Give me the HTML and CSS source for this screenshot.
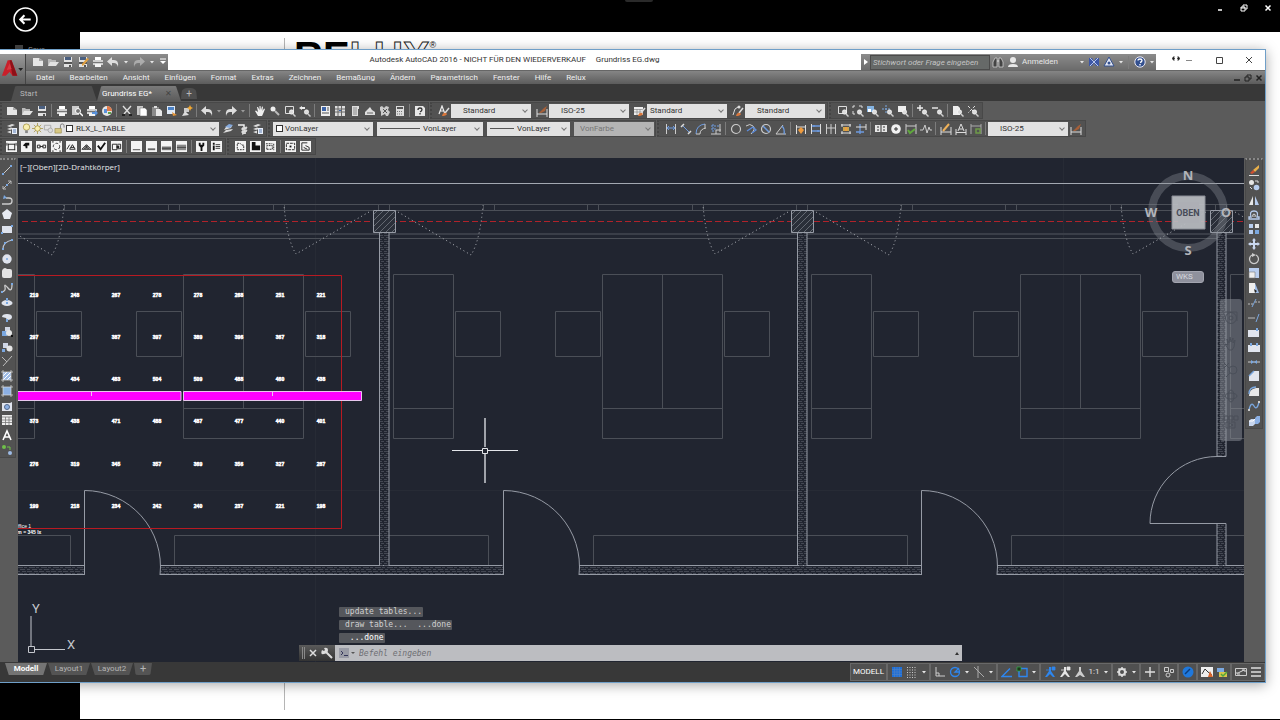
FILE: index.html
```html
<!DOCTYPE html>
<html lang="de">

<head>
  <meta charset="UTF-8">
  <meta name="viewport" content="width=device-width, initial-scale=1.0">
  <title>Autodesk AutoCAD 2016 - Grundriss EG.dwg</title>
  <link rel="stylesheet" href="styles.css">
</head>

<body>

  <!-- icon sprite, all on a 12x12 grid -->
  <svg class="sprite" aria-hidden="true">
    <!-- files and clipboard -->
    <symbol id="i-new" viewBox="0 0 12 12"><path d="M1 2h6l4 3v5H1z" fill="#e6e6e6"/><path d="M7 2v3h4z" fill="#aaa"/></symbol>
    <symbol id="i-open" viewBox="0 0 12 12"><path d="M1 10V3h3l1 1h4v2" fill="#b9b9b9"/><path d="M1 10l2-4h9l-3 4z" fill="#e2e2e2"/></symbol>
    <symbol id="i-save" viewBox="0 0 12 12"><path d="M2 1h8v10H2z" fill="#e2e2e2"/><path d="M3 1h6v3H3z" fill="#4a5f80"/><path d="M2 6h8v2H2z" fill="#555"/><path d="M7 9h2v2H7z" fill="#555"/></symbol>
    <symbol id="i-saveas" viewBox="0 0 12 12"><use href="#i-save"/><path d="M5 8l5-6 2 1-5 6-2 1z" fill="#e0a040"/></symbol>
    <symbol id="i-print" viewBox="0 0 12 12"><path d="M3 1h6v3H3z" fill="#fff"/><path d="M1 4h10v5H1z" fill="#cfcfcf"/><path d="M1 6h10v1H1z" fill="#777"/><path d="M3 8h6v3H3z" fill="#f4f4f4"/></symbol>
    <symbol id="i-preview" viewBox="0 0 12 12"><path d="M1 1h7v9H1z" fill="#ccc"/><circle cx="7" cy="6" r="2.5" fill="#777" stroke="#fff"/><path d="M9 8l3 3" stroke="#fff" stroke-width="1.5"/></symbol>
    <symbol id="i-publish" viewBox="0 0 12 12"><use href="#i-print"/><path d="M6 7h3V5l3 3-3 3V9H6z" fill="#5a93dc"/></symbol>
    <symbol id="i-dwf" viewBox="0 0 12 12"><circle cx="6" cy="6" r="5" fill="#e5e5e5"/><path d="M6 1a5 5 0 0 1 5 5H6z" fill="#e07a4a"/><path d="M3 4h3v4H3z" fill="#5a93dc"/><path d="M7 7h3v2H7z" fill="#5aa04a"/></symbol>
    <symbol id="i-cut" viewBox="0 0 12 12"><path d="M2 1l7 8M10 1L3 9" stroke="#ddd" stroke-width="1.4"/><path d="M1 9h3v2H1zM8 9h3v2H8z" fill="#222"/></symbol>
    <symbol id="i-copy" viewBox="0 0 12 12"><path d="M1 1h6v9H1z" fill="#c9c9c9"/><path d="M4 3h5l2 2v6H4z" fill="#fff" stroke="#666" stroke-width=".5"/></symbol>
    <symbol id="i-paste" viewBox="0 0 12 12"><path d="M1 2h7v9H1z" fill="#8b8b8b"/><path d="M3 1h3v2H3z" fill="#ddd"/><path d="M5 4h4l2 2v5H5z" fill="#e8e8e8"/></symbol>
    <symbol id="i-match" viewBox="0 0 12 12"><path d="M1 1h8v8H1z" fill="#dfe9f6"/><path d="M2 2h6v3H2z" fill="#4c82c6"/><path d="M6 7l5 3-4 1z" fill="#e5963a"/></symbol>
    <symbol id="i-block" viewBox="0 0 12 12"><path d="M3 3h5v4H3z" fill="#ccc"/><path d="M1 11l3-5 4 4z" fill="#ddd"/><path d="M9 0l1 2 2 1-2 1-1 2-1-2-2-1 2-1z" fill="#f2a830"/></symbol>
    <symbol id="i-undo" viewBox="0 0 12 12"><path d="M5 1v3h2q5 0 4 7-1-4-4-4H5v3L0 5.500z" fill="#ddd"/></symbol>
    <symbol id="i-redo" viewBox="0 0 12 12"><path d="M7 1v3H5q-5 0-4 7 1-4 4-4h2v3l5-4.500z" fill="#ddd"/></symbol>
    <symbol id="i-down" viewBox="0 0 12 12"><path d="M4 5h4L6 7.500z" fill="currentColor"/></symbol>
    <!-- navigation -->
    <symbol id="i-hand" viewBox="0 0 12 12"><path d="M4 11L1 6l1-.5 2 1.500L3 2h1l1.500 3V1h1l.5 4 1-3.500 1 .3L8.500 6 10 3.500l1 .5-2 5-1 2z" fill="#eee"/></symbol>
    <symbol id="i-zoom" viewBox="0 0 12 12"><circle cx="4" cy="4" r="2.500" fill="#eee"/><path d="M6 6l4 4" stroke="#bbb" stroke-width="2"/></symbol>
    <symbol id="i-glass" viewBox="0 0 12 12"><circle cx="7.500" cy="7" r="2.200" fill="#ddd" stroke="#fff" stroke-width=".6"/><path d="M9 9l2.500 2.500" stroke="#ccc" stroke-width="1.500"/></symbol>
    <symbol id="i-zwin" viewBox="0 0 12 12"><path d="M1.500 1.500h8v7h-8z" fill="none" stroke="#ddd"/><use href="#i-glass"/></symbol>
    <symbol id="i-zdyn" viewBox="0 0 12 12"><path d="M1 3V1h2M7 1h3v2M1 6v3h2" fill="none" stroke="#ddd"/><use href="#i-glass"/></symbol>
    <symbol id="i-zscale" viewBox="0 0 12 12"><path d="M0 1h7v6H0z" fill="#85b4e2"/><path d="M1 4h3v3H1z" fill="#fff"/><use href="#i-glass"/></symbol>
    <symbol id="i-zcenter" viewBox="0 0 12 12"><path d="M4 0v8M0 4h8" stroke="#7ba8e0" stroke-dasharray="2 1"/><use href="#i-glass"/></symbol>
    <symbol id="i-zobj" viewBox="0 0 12 12"><path d="M1 1h8v6H1z" fill="#eee"/><use href="#i-glass"/></symbol>
    <symbol id="i-zin" viewBox="0 0 12 12"><path d="M3 0v6M0 3h6" stroke="#eee" stroke-width="1.400"/><use href="#i-glass"/></symbol>
    <symbol id="i-zout" viewBox="0 0 12 12"><path d="M0 3h6" stroke="#eee" stroke-width="1.400"/><use href="#i-glass"/></symbol>
    <symbol id="i-zall" viewBox="0 0 12 12"><path d="M1 1h5l2 2v7H1z" fill="#eee"/><use href="#i-glass"/></symbol>
    <symbol id="i-zext" viewBox="0 0 12 12"><path d="M1 1l7 7M8 1L1 8" stroke="#ddd" stroke-dasharray="3 1.500"/><use href="#i-glass"/></symbol>
    <symbol id="i-zprev" viewBox="0 0 12 12"><path d="M0 3l3-2v1h3v2H3v1z" fill="#eee"/><use href="#i-glass"/></symbol>
    <!-- palettes -->
    <symbol id="i-props" viewBox="0 0 12 12"><path d="M2 1h9v10H2z" fill="#eee"/><path d="M3 2h4v4H3z" fill="#3d64a8"/><path d="M8 3h2M8 5h2M3 8h7" stroke="#555"/></symbol>
    <symbol id="i-dc" viewBox="0 0 12 12"><path d="M1 1h10v10H1z" fill="#ddd"/><path d="M1 4h10M1 7h10M4 1v10M7.500 1v10" stroke="#666"/><path d="M5 5h2v1H5z" fill="#3d64a8"/></symbol>
    <symbol id="i-pal" viewBox="0 0 12 12"><path d="M3 1h7v3H9v7H3z" fill="#ddd"/><path d="M4 3h4M4 5h4M4 7h4M4 9h4" stroke="#777" stroke-width=".8"/></symbol>
    <symbol id="i-sheet" viewBox="0 0 12 12"><path d="M1 10V7l5-5 2 3 3 2v3z" fill="#ddd"/><path d="M3 8h6" stroke="#666"/></symbol>
    <symbol id="i-markup" viewBox="0 0 12 12"><path d="M1 2l2-1 2 2 2-2 3 1-1 3 2 2-2 4H7L6 9l-4 2V7L1 5z" fill="#ccc"/><path d="M4 4l4 4M4 8l4-4" stroke="#555"/></symbol>
    <symbol id="i-calc" viewBox="0 0 12 12"><path d="M2 1h8v10H2z" fill="#ddd"/><path d="M3 2h6v2H3z" fill="#555"/><path d="M3 6.500h6M3 9h6" stroke="#777" stroke-dasharray="1 1"/></symbol>
    <symbol id="i-help" viewBox="0 0 12 12"><path d="M1 1h8l2 2v8H1z" fill="#e8e8e8"/><path d="M4 5q0-2 2-2t2 1.500Q8 6 6 7M6 8v1.500" fill="none" stroke="#333" stroke-width="1.300"/></symbol>
    <!-- styles -->
    <symbol id="i-brush" viewBox="0 0 12 12"><path d="M11 3L7 8" stroke="#ddd" stroke-width="1.500"/><path d="M4 11q1-4 4-3l1 1q-1 2-5 2z" fill="#d9773c"/></symbol>
    <symbol id="i-tstyle" viewBox="0 0 12 12"><path d="M1 9l3-8 3 8M2 6h4" fill="none" stroke="#eee" stroke-width="1.200"/><use href="#i-brush"/></symbol>
    <symbol id="i-dstyle" viewBox="0 0 12 12"><path d="M1 4v8M11 4v8M1 9h10" stroke="#ddd"/><path d="M3 8l5-5 3-2-2 5-4 2z" fill="#a65f38"/></symbol>
    <symbol id="i-tabstyle" viewBox="0 0 12 12"><path d="M0 2h9v8H0z" fill="#eee"/><path d="M0 4.500h9M0 7h9M3 4v6M6 4v6" stroke="#888" stroke-width=".7"/><use href="#i-brush"/></symbol>
    <symbol id="i-mlstyle" viewBox="0 0 12 12"><path d="M1 10l2-6 3-2" fill="none" stroke="#ddd"/><circle cx="7" cy="2" r="1.500" fill="#ddd"/><use href="#i-brush"/></symbol>
    <!-- layers -->
    <symbol id="i-layers" viewBox="0 0 12 12"><path d="M1 3l5-2 3 1-5 2zM1 6l4-1.500 3 1L4 7zM1 9l4-1.500v3z" fill="#ddd"/><path d="M6 5h5v6H6z" fill="#e9eef6"/><path d="M7 7h3M7 9h3" stroke="#5c7fb5"/></symbol>
    <symbol id="i-laycur" viewBox="0 0 12 12"><path d="M1 10l8-2 2-2-7 1zM2 7l7-2 1-2-6 1z" fill="#ddd"/><path d="M3 4l4-3 4 1-3 3z" fill="#85a9dc"/></symbol>
    <symbol id="i-layprev" viewBox="0 0 12 12"><path d="M5 5l5-1-1 2-4 1zM5 8l5-1-1 2-4 1zM5 11l4-1z" fill="#ddd" stroke="#ddd"/><path d="M1 2h6v2" fill="none" stroke="#eee" stroke-width="1.500"/></symbol>
    <symbol id="i-bulb" viewBox="0 0 12 12"><circle cx="6" cy="4.500" r="3.500" fill="#f8efb0" stroke="#a08e3c" stroke-width=".8"/><path d="M4.500 8h3v3h-3z" fill="#888"/></symbol>
    <symbol id="i-sun" viewBox="0 0 12 12"><path d="M6 0v12M0 6h12M2 2l8 8M10 2l-8 8" stroke="#a08e3c" stroke-width=".8"/><circle cx="6" cy="6" r="3" fill="#f8efb0" stroke="#a08e3c" stroke-width=".8"/></symbol>
    <symbol id="i-vpfreeze" viewBox="0 0 12 12"><path d="M1.500 2.500h7v5h-7z" fill="none" stroke="#aaa"/><circle cx="8" cy="8" r="2.500" fill="#ddd" stroke="#999" stroke-width=".7"/></symbol>
    <symbol id="i-lock" viewBox="0 0 12 12"><path d="M7 6V3q0-2 2-2t2 2v2" fill="none" stroke="#777"/><path d="M1 6h7v5H1z" fill="#d8c983" stroke="#8a7c42" stroke-width=".6"/></symbol>
    <!-- dimensions -->
    <symbol id="i-dlin" viewBox="0 0 12 12"><path d="M1.500 1v10M10.500 1v10" stroke="#ccc"/><path d="M2 5h8M4 3L2 5l2 2M8 3l2 2-2 2" fill="none" stroke="#6d9be0"/></symbol>
    <symbol id="i-dali" viewBox="0 0 12 12"><path d="M3 3l6 6" stroke="#6d9be0"/><path d="M1 4l3-3M8 11l3-3" stroke="#ddd" stroke-width="1.500"/></symbol>
    <symbol id="i-darc" viewBox="0 0 12 12"><path d="M1 11Q1 2 10 1" fill="none" stroke="#6d9be0"/><path d="M5 11Q5 6 11 5M1 11h4M10 1v4" fill="none" stroke="#ccc"/></symbol>
    <symbol id="i-dord" viewBox="0 0 12 12"><path d="M1 11h10M6 7h5M6 7v4M10 1v8" stroke="#ccc"/><path d="M1 3h8M3 1v9M1 6h5" stroke="#6d9be0" stroke-dasharray="2 1"/></symbol>
    <symbol id="i-drad" viewBox="0 0 12 12"><circle cx="6" cy="6" r="4.500" fill="none" stroke="#ccc" stroke-width="1.200"/></symbol>
    <symbol id="i-djog" viewBox="0 0 12 12"><path d="M1 3q4-3 7 0t-2 8" fill="none" stroke="#ccc"/><path d="M2 8l6-4M8 4l3 3-4 3" fill="none" stroke="#5d8ee0" stroke-width="1.300"/></symbol>
    <symbol id="i-ddia" viewBox="0 0 12 12"><use href="#i-drad"/><path d="M3 3l6 6" stroke="#6d9be0" stroke-width="1.500"/></symbol>
    <symbol id="i-dang" viewBox="0 0 12 12"><path d="M11 11H1l7-9" fill="none" stroke="#ccc"/><path d="M7 3q3 3 2 8" fill="none" stroke="#6d9be0" stroke-width="1.300"/></symbol>
    <symbol id="i-dquick" viewBox="0 0 12 12"><path d="M1.500 2v9M10.500 2v9M2 4h8" stroke="#ddd"/><path d="M6 4l3 3-3 4-3-4z" fill="#ef9b3e"/></symbol>
    <symbol id="i-dbase" viewBox="0 0 12 12"><path d="M1.500 1v10M10.500 1v10" stroke="#ddd"/><path d="M2 3h8M2 8h8M4 2v2M8 7v2" stroke="#6d9be0" stroke-width="1.300"/></symbol>
    <symbol id="i-dcont" viewBox="0 0 12 12"><path d="M1.500 1v10M6 1v10M10.500 1v10M1 5h10" stroke="#ccc"/></symbol>
    <symbol id="i-dspace" viewBox="0 0 12 12"><path d="M1 2h10M1 10h10M2 1v3M10 1v3M2 8v3M10 8v3" stroke="#ddd"/><path d="M3 4h6v4H3z" fill="#cba64c"/><path d="M5 4h2v4H5z" fill="#ef9b3e"/></symbol>
    <symbol id="i-dbreak" viewBox="0 0 12 12"><path d="M5 1v10M1 9h8" stroke="#6d9be0" stroke-width="1.300"/><path d="M1 4h10M11 1v6" stroke="#ddd"/></symbol>
    <symbol id="i-tol" viewBox="0 0 12 12"><path d="M0 2h12v7H0z" fill="#e6e6e6"/><path d="M6 2v7M2 4h2M2 7h2M8 4h2M8 7h2" stroke="#333"/></symbol>
    <symbol id="i-cmark" viewBox="0 0 12 12"><circle cx="6" cy="6" r="4.800" fill="#f2f2f2"/><path d="M6 4v4M4 6h4" stroke="#333"/></symbol>
    <symbol id="i-dinsp" viewBox="0 0 12 12"><path d="M1 1v10M11 1v10M1 3h10" stroke="#ccc"/><path d="M3 7l2 3 5-4" fill="none" stroke="#5fa83c" stroke-width="2"/></symbol>
    <symbol id="i-djogl" viewBox="0 0 12 12"><path d="M0 7h3l2-5 2 8 2-6 1 3h2" fill="none" stroke="#ccc"/></symbol>
    <symbol id="i-dedit" viewBox="0 0 12 12"><path d="M1 4v8M11 4v8M1 9h10" stroke="#ddd"/><path d="M3 8l6-7" stroke="#efb25a" stroke-width="2"/></symbol>
    <symbol id="i-dtedit" viewBox="0 0 12 12"><path d="M1 6v6M11 6v6M1 9.500h10M3 8l3-7 3 7M4 6h4" fill="none" stroke="#ddd"/></symbol>
    <symbol id="i-dupd" viewBox="0 0 12 12"><path d="M1 1v10M11 1v10M1 3h10" stroke="#aaa"/><path d="M6 6h4v4H6z" fill="none" stroke="#6f9a4a" stroke-width="1.500"/></symbol>
    <!-- Relux tools, black on white -->
    <symbol id="i-r1" viewBox="0 0 12 12"><path d="M2 3.500h8M2.500 3v7M9.500 3v7M2 9.500h8M1 2v3M11 2v3" stroke="#222" fill="none"/></symbol>
    <symbol id="i-r2" viewBox="0 0 12 12"><path d="M2 5l3-3h4v3H7v3H5V6z" fill="#111"/></symbol>
    <symbol id="i-r3" viewBox="0 0 12 12"><path d="M1.500 4.500h3v3h-3zM7.500 4.500h3v3h-3zM4 6h4" fill="none" stroke="#222"/></symbol>
    <symbol id="i-r4" viewBox="0 0 12 12"><circle cx="6" cy="6" r="3.500" fill="none" stroke="#222" stroke-dasharray="3 2"/><path d="M1 1h2M9 1h2M1 11h2M9 11h2" stroke="#222"/></symbol>
    <symbol id="i-r5" viewBox="0 0 12 12"><path d="M1 9l3-5M4 9l3-5 3 5zM5 7h4" fill="none" stroke="#222"/></symbol>
    <symbol id="i-r6" viewBox="0 0 12 12"><path d="M1 9l5-5 5 5zM3 9l3-4 3 4M5 9l1-3 1 3" fill="none" stroke="#222"/></symbol>
    <symbol id="i-r7" viewBox="0 0 12 12"><path d="M2 5l3 4 5-7" fill="none" stroke="#111" stroke-width="2"/></symbol>
    <symbol id="i-r8" viewBox="0 0 12 12"><path d="M1.500 3.500h5v6h-5zM7 3.500h3.500v5H7" fill="none" stroke="#222"/><path d="M6 5h3v3H6z" fill="#222"/></symbol>
    <symbol id="i-r9" viewBox="0 0 12 12"><path d="M2 9.500h8" stroke="#444"/></symbol>
    <symbol id="i-r10" viewBox="0 0 12 12"><path d="M2 9h8" stroke="#666" stroke-width="2"/></symbol>
    <symbol id="i-r11" viewBox="0 0 12 12"><path d="M1 6h10v4H1z" fill="#777"/><path d="M1 8h10" stroke="#444"/></symbol>
    <symbol id="i-r12" viewBox="0 0 12 12"><path d="M1 4h10v6H1z" fill="#888"/><path d="M1 7h10" stroke="#444"/></symbol>
    <symbol id="i-r13" viewBox="0 0 12 12"><path d="M3 2h2v2h2V2h2v3L7 7v4H5V7L3 5z" fill="#111"/></symbol>
    <symbol id="i-r14" viewBox="0 0 12 12"><path d="M2 2h2v2H2zM2 5h2v5H2z" fill="#111"/><path d="M5 4h5M5 6h5M5 8h5" stroke="#333"/></symbol>
    <symbol id="i-r15" viewBox="0 0 12 12"><path d="M2.500 2.500h3l2 2h2v5h-7z" fill="none" stroke="#222" stroke-dasharray="2 1"/></symbol>
    <symbol id="i-r16" viewBox="0 0 12 12"><path d="M2 1h4v4h5v5H2z" fill="#111"/></symbol>
    <symbol id="i-r17" viewBox="0 0 12 12"><path d="M1 3h7M2 9V5h6v4zM9.500 3v7" fill="none" stroke="#222" stroke-dasharray="2 1"/></symbol>
    <symbol id="i-r18" viewBox="0 0 12 12"><path d="M1.500 2.500h9v7h-9z" fill="none" stroke="#222" stroke-dasharray="3 1"/><path d="M5 5h2v2H5z" fill="#111"/></symbol>
    <symbol id="i-r19" viewBox="0 0 12 12"><path d="M2 2h6M2 2v8h8V7L6 5M4 7l4 2" fill="none" stroke="#222"/></symbol>
    <!-- draw -->
    <symbol id="i-line" viewBox="0 0 12 12"><path d="M2 10l8-8" stroke="#ccc"/><path d="M1 9h2v2H1zM9 1h2v2H9z" fill="#7ba8e0"/></symbol>
    <symbol id="i-xline" viewBox="0 0 12 12"><path d="M2 10l8-8M2 7v3h3M7 2h3v3" fill="none" stroke="#bbb"/><path d="M5 5h2v2H5z" fill="#7ba8e0"/></symbol>
    <symbol id="i-pline" viewBox="0 0 12 12"><path d="M1 10h7q3 0 3-3T8 4H5" fill="none" stroke="#ccc" stroke-width="1.300"/><path d="M3 1l3 3-4 1z" fill="#7ba8e0"/></symbol>
    <symbol id="i-poly" viewBox="0 0 12 12"><path d="M6 1l5 4-2 6H3L1 5z" fill="#e8ebf2"/></symbol>
    <symbol id="i-rect" viewBox="0 0 12 12"><path d="M1 3h10v7H1z" fill="#dfe3ec"/><path d="M0 9h2v2H0zM10 2h2v2h-2z" fill="#7ba8e0"/></symbol>
    <symbol id="i-arc" viewBox="0 0 12 12"><path d="M2 11q0-7 9-9" fill="none" stroke="#bbc3d2" stroke-width="1.200"/><path d="M1 10h2v2H1zM3 4h2v2H3zM10 1h2v2h-2z" fill="#7ba8e0"/></symbol>
    <symbol id="i-circ" viewBox="0 0 12 12"><circle cx="6" cy="6" r="4.700" fill="#dfe3ec"/><circle cx="6" cy="6" r="1" fill="#7ba8e0"/></symbol>
    <symbol id="i-cloud" viewBox="0 0 12 12"><rect x="1" y="2" width="10" height="9" rx="2" fill="#e3e3e3"/><circle cx="4" cy="3" r="2" fill="#e3e3e3"/></symbol>
    <symbol id="i-spline" viewBox="0 0 12 12"><path d="M1 10q4-1 3-5t3 1 4-4" fill="none" stroke="#ccc" stroke-width="1.300"/><path d="M0 9h2v2H0zM10 1h2v2h-2z" fill="#7ba8e0"/></symbol>
    <symbol id="i-ell" viewBox="0 0 12 12"><ellipse cx="6" cy="6" rx="5.500" ry="3" fill="#dfe3ec"/><path d="M5 1h2v3H5z" fill="#7ba8e0"/><path d="M5 5h2v2H5z" fill="#7ba8e0"/></symbol>
    <symbol id="i-ellarc" viewBox="0 0 12 12"><path d="M1 6q0-3 5-3t5 3-5 3l-1-2z" fill="#dfe3ec"/><path d="M5 8h2v3H5z" fill="#7ba8e0"/></symbol>
    <symbol id="i-ins" viewBox="0 0 12 12"><path d="M4 1h5v5H4z" fill="#cfd6e4"/><path d="M1 5h5v5H1z" fill="#7ba8e0"/><circle cx="8" cy="7" r="3" fill="#e6e6e6"/><path d="M10 9h2v2h-2z" fill="#111"/></symbol>
    <symbol id="i-mkblk" viewBox="0 0 12 12"><path d="M2 2h5v5H2z" fill="#cfd6e4"/><circle cx="8.500" cy="7.500" r="3" fill="#e6e6e6"/><path d="M1 8h3v3H1z" fill="#7ba8e0"/></symbol>
    <symbol id="i-point" viewBox="0 0 12 12"><path d="M1 2l5 5M11 1L2 11" stroke="#bbb"/></symbol>
    <symbol id="i-hatch" viewBox="0 0 12 12"><path d="M2 2h8v8H2z" fill="#9dbbe6"/><path d="M2 6l4-4M2 10l8-8M6 10l4-4" stroke="#fff"/><path d="M0 2h12M0 10h12M2 0v12M10 0v12" stroke="#ddd" stroke-width=".7"/></symbol>
    <symbol id="i-grad" viewBox="0 0 12 12"><path d="M2 2h8v8H2z" fill="#8cb0e4"/><path d="M0 2h12M0 10h12M2 0v12M10 0v12" stroke="#ddd" stroke-width=".7"/></symbol>
    <symbol id="i-region" viewBox="0 0 12 12"><path d="M1 3h8l2-1v9H1z" fill="#e1e5ee"/><circle cx="6" cy="7" r="2.500" fill="#8cb0e4" stroke="#54698c"/></symbol>
    <symbol id="i-table" viewBox="0 0 12 12"><path d="M1 1h10v10H1z" fill="#eee"/><path d="M1 3h10M1 6h10M1 8.500h10M4.500 3v8M8 3v8" stroke="#777" stroke-width=".8"/></symbol>
    <symbol id="i-mtext" viewBox="0 0 12 12"><path d="M2 11l4-9 4 9M3.500 8h5" fill="none" stroke="#fff" stroke-width="1.600"/></symbol>
    <symbol id="i-addsel" viewBox="0 0 12 12"><circle cx="3" cy="3" r="2" fill="#6fc04a"/><circle cx="9" cy="9" r="2" fill="#9dbbe6"/><path d="M6 3h3v3" fill="none" stroke="#6fc04a"/></symbol>
    <!-- modify -->
    <symbol id="i-erase" viewBox="0 0 12 12"><path d="M5 6l6-5v3L7 8z" fill="#e8b04a"/><path d="M2 9l3-3 2 2-3 2z" fill="#d05030"/><path d="M1 11.500h10" stroke="#ddd"/></symbol>
    <symbol id="i-mcopy" viewBox="0 0 12 12"><circle cx="3.500" cy="3.500" r="2.500" fill="#e6e6e6"/><circle cx="8.500" cy="8.500" r="2.800" fill="#b8cdee"/><path d="M7 2h3v2M2 8l2 2" fill="none" stroke="#ddd"/></symbol>
    <symbol id="i-mirror" viewBox="0 0 12 12"><path d="M5 2v9H1z" fill="#e6e6e6"/><path d="M7 2v9h4z" fill="#b8cdee"/></symbol>
    <symbol id="i-offset" viewBox="0 0 12 12"><path d="M1 10h10V8H9q2-6-3-6T3 8H1z" fill="none" stroke="#b8cdee" stroke-width="1.300"/><path d="M5 8q-1-3 1-3t1 3" fill="none" stroke="#ddd"/></symbol>
    <symbol id="i-array" viewBox="0 0 12 12"><path d="M1 1h4v4H1zM1 7h4v4H1z" fill="#b8cdee"/><path d="M7 1h4v4H7z" fill="#e6e6e6"/><path d="M7 7h4v4H7z" fill="#7ba8e0"/></symbol>
    <symbol id="i-move" viewBox="0 0 12 12"><path d="M6 0l2 2.500H7V5h2.500V4L12 6 9.500 8V7H7v2.500h1L6 12 4 9.500h1V7H2.500v1L0 6l2.500-2v1H5V2.500H4z" fill="#c8d6ee"/></symbol>
    <symbol id="i-rotate" viewBox="0 0 12 12"><path d="M4 2a4.500 4.500 0 1 0 4 0" fill="none" stroke="#ccc" stroke-width="1.300"/><path d="M4 0l4 2-4 2z" fill="#ccc"/></symbol>
    <symbol id="i-scale" viewBox="0 0 12 12"><path d="M1 1h10v10H1z" fill="#b8cdee"/><path d="M1 5h6v6H1z" fill="#eee" stroke="#777" stroke-width=".6"/></symbol>
    <symbol id="i-stretch" viewBox="0 0 12 12"><path d="M1 1h6v10H1z" fill="#eee"/><path d="M7 1l4 10H7z" fill="#9dbbe6"/><path d="M6 7l3 2-2 2z" fill="#222"/></symbol>
    <symbol id="i-trim" viewBox="0 0 12 12"><path d="M4 10l4-8" stroke="#7ba8e0"/><path d="M0 7h5M7 5h5" stroke="#bbb" stroke-dasharray="2 1"/></symbol>
    <symbol id="i-extend" viewBox="0 0 12 12"><path d="M0 6h7" stroke="#bbb"/><path d="M8 10l3-8" stroke="#7ba8e0"/></symbol>
    <symbol id="i-brkpt" viewBox="0 0 12 12"><path d="M0 4h11v7H0z" fill="#e1e5ee"/><path d="M8 2h2v3H8z" fill="#7ba8e0"/></symbol>
    <symbol id="i-brk" viewBox="0 0 12 12"><path d="M0 4h12v7H0z" fill="#e1e5ee"/><path d="M2 2h2v3H2zM8 2h2v3H8z" fill="#7ba8e0"/></symbol>
    <symbol id="i-join" viewBox="0 0 12 12"><path d="M0 6h12" stroke="#ccc"/><path d="M3 4l3 2-3 2zM9 4L6 6l3 2z" fill="#7ba8e0"/></symbol>
    <symbol id="i-cham" viewBox="0 0 12 12"><path d="M1 11V6l5-5h5v10z" fill="#e1e5ee"/><path d="M1 6l5-5" stroke="#7ba8e0" stroke-width="1.500"/></symbol>
    <symbol id="i-fillet" viewBox="0 0 12 12"><path d="M1 11q0-7 7-8h3v8z" fill="#e8e8e8"/><path d="M1 9q0-7 7-7" fill="none" stroke="#7ba8e0" stroke-width="1.300"/></symbol>
    <symbol id="i-blend" viewBox="0 0 12 12"><path d="M1 10q2-9 5-4t5-4" fill="none" stroke="#7ba8e0" stroke-width="1.300"/><path d="M0 9h2v2H0zM10 1h2v2h-2z" fill="#ccc"/></symbol>
    <symbol id="i-explode" viewBox="0 0 12 12"><path d="M1 6l2-2h4v5l-2 2H1z" fill="#c8d6ee"/><path d="M7 3l2-2h3v6l-2 2H7z" fill="#8cb0e4"/><path d="M1 6h4l2-2" fill="none" stroke="#fff"/></symbol>
    <!-- info center -->
    <symbol id="i-binoc" viewBox="0 0 12 12"><path d="M1 11V6l2-4h2v9zM7 11V2h2l2 4v5z" fill="#444" stroke="#ddd" stroke-width=".7"/><path d="M5 5h2" stroke="#ddd"/></symbol>
    <symbol id="i-user" viewBox="0 0 12 12"><circle cx="6" cy="4" r="3" fill="#e8e8e8"/><path d="M1 11q0-3 5-3t5 3z" fill="#e8e8e8"/></symbol>
    <symbol id="i-exch" viewBox="0 0 12 12"><path d="M1 2h3l2 3 2-3h3v8H8L6 7l-2 3H1z" fill="#3c57a8"/><path d="M2 2l4 4-4 4M10 2L6 6l4 4" fill="none" stroke="#b9c6ea"/></symbol>
    <symbol id="i-a360" viewBox="0 0 12 12"><path d="M6 1l5 9H1z" fill="#e4e8f4" stroke="#33508f"/><circle cx="6" cy="7" r="1.500" fill="#33508f"/></symbol>
    <symbol id="i-q" viewBox="0 0 12 12"><circle cx="6" cy="6" r="5.200" fill="#33508f" stroke="#e8e8f4"/><path d="M4 4.500Q4 3 6 3t2 1.500Q8 6 6 6.500M6 8v1.500" fill="none" stroke="#fff" stroke-width="1.300"/></symbol>
    <!-- status bar -->
    <symbol id="s-grid" viewBox="0 0 12 12"><path d="M1 1h10v10H1z" fill="#1f6fd6"/><path d="M3.500 1v10M6 1v10M8.500 1v10M1 3.500h10M1 6h10M1 8.500h10" stroke="#4a7fc4" stroke-width=".7"/></symbol>
    <symbol id="s-snap" viewBox="0 0 12 12"><path d="M1 1.500h10M1 4h10M1 6.500h10M1 9h10M1 11.500h10" stroke="#ccc" stroke-dasharray="1 1.500"/></symbol>
    <symbol id="s-ortho" viewBox="0 0 12 12"><path d="M2 1v9h9M2 7h3v3" fill="none" stroke="#ccc"/></symbol>
    <symbol id="s-polar" viewBox="0 0 12 12"><circle cx="6" cy="6" r="4.500" fill="none" stroke="#2e86ee" stroke-width="1.300"/><path d="M10 6H6l4-4" fill="none" stroke="#2e86ee" stroke-width="1.300"/></symbol>
    <symbol id="s-iso" viewBox="0 0 12 12"><path d="M1 1l10 10M5 0v12" stroke="#aaa"/></symbol>
    <symbol id="s-track" viewBox="0 0 12 12"><path d="M11 10.500H1l8-8" fill="none" stroke="#2e86ee" stroke-width="1.400"/></symbol>
    <symbol id="s-osnap" viewBox="0 0 12 12"><path d="M3 2.500h8v8H3z" fill="none" stroke="#2e86ee" stroke-width="1.400"/><path d="M1 1h4v4H1z" fill="#1c3a1c" stroke="#35b04a" stroke-width=".7"/></symbol>
    <symbol id="s-anno" viewBox="0 0 12 12"><path d="M5 1h2v4l4 6-2 0-3-3-3 3H1l4-6z" fill="currentColor"/><path d="M2 4h4M8 1h3v3H8z" fill="currentColor" stroke="currentColor" stroke-width=".8"/></symbol>
    <symbol id="s-scale" viewBox="0 0 12 12"><path d="M5 1h2v4l4 6H9L6 9l-3 2H1l4-6z" fill="#ccc"/></symbol>
    <symbol id="s-gear" viewBox="0 0 12 12"><circle cx="6" cy="6" r="3" fill="none" stroke="#ddd" stroke-width="2"/><path d="M6 1v2M6 9v2M1 6h2M9 6h2M2.500 2.500L4 4M8 8l1.500 1.500M9.500 2.500L8 4M4 8L2.500 9.500" stroke="#ddd" stroke-width="1.500"/></symbol>
    <symbol id="s-plus" viewBox="0 0 12 12"><path d="M6 1v10M1 6h10" stroke="#ddd" stroke-width="1.400"/></symbol>
    <symbol id="s-iso2" viewBox="0 0 12 12"><path d="M1.500 1.500h4v4h-4zM7.500 3.500h3v3h-3z" fill="none" stroke="#ccc"/><circle cx="5" cy="9" r="2" fill="none" stroke="#ccc"/></symbol>
    <symbol id="s-hw" viewBox="0 0 12 12"><circle cx="6" cy="6" r="5.500" fill="#1f78dc"/><path d="M3 8l5-5" stroke="#0d3c7a" stroke-width="1.500"/></symbol>
    <symbol id="s-mon" viewBox="0 0 12 12"><path d="M0 1h12v10H0z" fill="#eee"/><path d="M1 8l3-5 3 3 4 3" fill="none" stroke="#333"/><path d="M9 5l3 6H7z" fill="#d9652b"/></symbol>
    <symbol id="s-plot" viewBox="0 0 12 12"><path d="M1 2h7v4H1z" fill="#7ba8e0"/><path d="M3 6h8v5H3z" fill="#d8c44a"/><path d="M5 8l2 2 4-4" fill="none" stroke="#4fa83c" stroke-width="1.500"/></symbol>
    <symbol id="s-clean" viewBox="0 0 12 12"><path d="M.500 2.500h11v7H.500z" fill="none" stroke="#ccc"/><path d="M7 4h3v2M5 8H2V6M3 7l6-3" fill="none" stroke="#ddd"/></symbol>
    <symbol id="s-menu" viewBox="0 0 12 12"><path d="M1 2h10M1 6h10M1 10h10" stroke="#ddd" stroke-width="1.500"/></symbol>
  </svg>

  <!-- host application behind the CAD window -->
  <div class="host">
    <header class="host-bar">
      <button class="back-btn" aria-label="Zurück">
        <svg viewBox="0 0 24 24"><circle cx="12" cy="12" r="11" fill="none" stroke="#fff" stroke-width="1.500"/><path d="M17 12H7M11 8l-4 4 4 4" fill="none" stroke="#fff" stroke-width="2"/></svg>
      </button>
      <span class="notch"></span>
      <div class="host-controls">
        <button aria-label="Minimieren"><svg viewBox="0 0 8 8"><path d="M2 6h4" stroke="#fff" stroke-width="1.500"/></svg></button>
        <button aria-label="Wiederherstellen"><svg viewBox="0 0 8 8"><path d="M3 3V1h4v4H5M1 3h4v4H1zM1 4h4" fill="none" stroke="#fff"/></svg></button>
        <button aria-label="Schließen"><svg viewBox="0 0 8 8"><path d="M1.500 1.500l5 5M6.500 1.500l-5 5" stroke="#fff" stroke-width="1.500"/></svg></button>
      </div>
    </header>
    <div class="host-main">
      <aside class="host-side"><span class="side-icon"></span>Save</aside>
      <main class="host-page">
        <div class="page-rule">
          <div class="logo"><b>RE</b><i>LUX</i><sup>®</sup></div>
        </div>
      </main>
    </div>
  </div>

  <div class="cad">
    <header class="cad-head">
      <button class="app-btn" aria-label="Anwendungsmenü">
        <svg viewBox="0 0 26 27"><path d="M2 20L8 4h4l6 16h-5l-3-4-4 4z" fill="#c9202b"/><path d="M10 4l2 0 6 16h-5z" fill="#8e1118"/><path d="M7 14l3-7 2 6z" fill="#d93a42"/><path d="M19 12h5l-2.500 3z" fill="#222"/></svg>
      </button>
      <div class="title-row">
        <div class="quick">
          <button class="tb" aria-label="Neu"><svg><use href="#i-new"/></svg></button>
          <button class="tb" aria-label="Öffnen"><svg><use href="#i-open"/></svg></button>
          <button class="tb" aria-label="Speichern"><svg><use href="#i-save"/></svg></button>
          <button class="tb" aria-label="Speichern unter"><svg><use href="#i-saveas"/></svg></button>
          <button class="tb" aria-label="Plotten"><svg><use href="#i-print"/></svg></button>
          <button class="tb" aria-label="Rückgängig"><svg><use href="#i-undo"/></svg></button>
          <button class="tb arrow" aria-label="Rückgängig-Liste"><svg><use href="#i-down"/></svg></button>
          <button class="tb dim" aria-label="Wiederherstellen"><svg><use href="#i-redo"/></svg></button>
          <button class="tb arrow" aria-label="Wiederherstellen-Liste"><svg><use href="#i-down"/></svg></button>
          <button class="tb arrow" aria-label="Anpassen"><svg viewBox="0 0 12 12"><path d="M3 3h6" stroke="#fff"/><path d="M3 5h6L6 8z" fill="#fff"/></svg></button>
        </div>
        <div class="title"><span>Autodesk AutoCAD 2016 - NICHT FÜR DEN WIEDERVERKAUF</span><span>Grundriss EG.dwg</span></div>
        <div class="info">
          <button class="tb arrow" aria-label="Einklappen"><svg viewBox="0 0 12 12"><path d="M4 3v6l4-3z" fill="#fff"/></svg></button>
          <input class="search" type="text" aria-label="Suche" placeholder="Stichwort oder Frage eingeben">
          <button class="tb" aria-label="Suchen"><svg><use href="#i-binoc"/></svg></button>
          <button class="login"><svg><use href="#i-user"/></svg>Anmelden</button>
          <button class="tb arrow" aria-label="Kontomenü"><svg><use href="#i-down"/></svg></button>
          <button class="tb" aria-label="Exchange"><svg><use href="#i-exch"/></svg></button>
          <button class="tb" aria-label="A360"><svg><use href="#i-a360"/></svg></button>
          <button class="tb arrow" aria-label="A360-Menü"><svg><use href="#i-down"/></svg></button>
          <span class="sep"></span>
          <button class="tb" aria-label="Hilfe"><svg><use href="#i-q"/></svg></button>
          <button class="tb arrow" aria-label="Hilfemenü"><svg><use href="#i-down"/></svg></button>
        </div>
        <div class="win-controls">
          <svg class="resize-mark" viewBox="0 0 8 8" aria-hidden="true"><path d="M0 2.500l2-2v4zM8 2.500l-2-2v4zM1 2.500h2M5 2.500h2" fill="#222" stroke="#222" stroke-width=".7"/></svg>
          <button aria-label="Minimieren"><svg viewBox="0 0 8 8"><path d="M1 4.500h6" stroke="#888"/></svg></button>
          <button aria-label="Maximieren"><svg viewBox="0 0 8 8"><path d="M1.500 1.500h6v6h-6z" fill="none" stroke="#444"/></svg></button>
          <button aria-label="Schließen"><svg viewBox="0 0 8 8"><path d="M1 1l6 6M7 1L1 7" stroke="#444"/></svg></button>
        </div>
      </div>
      <nav class="menu-row">
        <a href="#">Datei</a>
        <a href="#">Bearbeiten</a>
        <a href="#">Ansicht</a>
        <a href="#">Einfügen</a>
        <a href="#">Format</a>
        <a href="#">Extras</a>
        <a href="#">Zeichnen</a>
        <a href="#">Bemaßung</a>
        <a href="#">Ändern</a>
        <a href="#">Parametrisch</a>
        <a href="#">Fenster</a>
        <a href="#">Hilfe</a>
        <a href="#">Relux</a>
        <div class="doc-controls">
          <button aria-label="Zeichnung minimieren"><svg viewBox="0 0 8 8"><path d="M1 6h6" stroke="#222" stroke-width="1.500"/></svg></button>
          <button aria-label="Zeichnung wiederherstellen"><svg viewBox="0 0 8 8"><path d="M3 3V1h4v4H5M1 3h4v4H1z" fill="none" stroke="#222"/></svg></button>
          <button aria-label="Zeichnung schließen"><svg viewBox="0 0 8 8"><path d="M1.500 1.500l5 5M6.500 1.500l-5 5" stroke="#222" stroke-width="1.500"/></svg></button>
        </div>
      </nav>
    </header>

    <div class="file-tabs">
      <button class="file-tab">Start</button>
      <button class="file-tab active">Grundriss EG*<span class="close">✕</span></button>
      <button class="file-tab plus" aria-label="Neue Zeichnung">+</button>
    </div>

    <div class="bars">
      <div class="bar-row">
        <div class="bar">
          <button class="tb" aria-label="Neu"><svg><use href="#i-new"/></svg></button>
          <button class="tb" aria-label="Öffnen"><svg><use href="#i-open"/></svg></button>
          <button class="tb" aria-label="Speichern"><svg><use href="#i-save"/></svg></button>
          <span class="sep"></span>
          <button class="tb" aria-label="Plotten"><svg><use href="#i-print"/></svg></button>
          <button class="tb" aria-label="Voransicht"><svg><use href="#i-preview"/></svg></button>
          <button class="tb" aria-label="Publizieren"><svg><use href="#i-publish"/></svg></button>
          <button class="tb" aria-label="3D-DWF"><svg><use href="#i-dwf"/></svg></button>
          <span class="sep"></span>
          <button class="tb" aria-label="Ausschneiden"><svg><use href="#i-cut"/></svg></button>
          <button class="tb" aria-label="Kopieren"><svg><use href="#i-copy"/></svg></button>
          <button class="tb" aria-label="Einfügen"><svg><use href="#i-paste"/></svg></button>
          <button class="tb" aria-label="Eigenschaften anpassen"><svg><use href="#i-match"/></svg></button>
          <button class="tb" aria-label="Blockeditor"><svg><use href="#i-block"/></svg></button>
          <span class="sep"></span>
          <button class="tb" aria-label="Rückgängig"><svg><use href="#i-undo"/></svg></button>
          <button class="tb arrow dim" aria-label="Rückgängig-Liste"><svg><use href="#i-down"/></svg></button>
          <button class="tb" aria-label="Wiederherstellen"><svg><use href="#i-redo"/></svg></button>
          <button class="tb arrow dim" aria-label="Wiederherstellen-Liste"><svg><use href="#i-down"/></svg></button>
          <span class="sep"></span>
          <button class="tb" aria-label="Pan"><svg><use href="#i-hand"/></svg></button>
          <button class="tb" aria-label="Zoom"><svg><use href="#i-zoom"/></svg></button>
          <button class="tb" aria-label="Zoom Fenster"><svg><use href="#i-zwin"/></svg></button>
          <button class="tb" aria-label="Zoom Vorher"><svg><use href="#i-zprev"/></svg></button>
          <span class="sep"></span>
          <button class="tb" aria-label="Eigenschaften"><svg><use href="#i-props"/></svg></button>
          <button class="tb" aria-label="DesignCenter"><svg><use href="#i-dc"/></svg></button>
          <button class="tb" aria-label="Werkzeugpaletten"><svg><use href="#i-pal"/></svg></button>
          <button class="tb" aria-label="Planungsunterlagen"><svg><use href="#i-sheet"/></svg></button>
          <button class="tb" aria-label="Markierungen"><svg><use href="#i-markup"/></svg></button>
          <button class="tb" aria-label="Taschenrechner"><svg><use href="#i-calc"/></svg></button>
          <span class="sep"></span>
          <button class="tb" aria-label="Hilfe"><svg><use href="#i-help"/></svg></button>
        </div>
        <div class="bar">
          <button class="tb" aria-label="Textstil"><svg><use href="#i-tstyle"/></svg></button>
          <span class="combo indent"><select aria-label="Textstil wählen"><option>Standard</option></select></span>
          <span class="gap"></span>
          <button class="tb" aria-label="Bemaßungsstil"><svg><use href="#i-dstyle"/></svg></button>
          <span class="combo indent"><select aria-label="Bemaßungsstil wählen"><option>ISO-25</option></select></span>
          <span class="gap"></span>
          <button class="tb" aria-label="Tabellenstil"><svg><use href="#i-tabstyle"/></svg></button>
          <span class="combo"><select aria-label="Tabellenstil wählen"><option>Standard</option></select></span>
          <span class="gap"></span>
          <button class="tb" aria-label="Multi-Führungslinienstil"><svg><use href="#i-mlstyle"/></svg></button>
          <span class="combo indent"><select aria-label="Führungslinienstil wählen"><option>Standard</option></select></span>
        </div>
        <div class="bar">
          <button class="tb" aria-label="Zoom Fenster"><svg><use href="#i-zwin"/></svg></button>
          <button class="tb" aria-label="Zoom Dynamisch"><svg><use href="#i-zdyn"/></svg></button>
          <button class="tb" aria-label="Zoom Faktor"><svg><use href="#i-zscale"/></svg></button>
          <button class="tb" aria-label="Zoom Mitte"><svg><use href="#i-zcenter"/></svg></button>
          <button class="tb" aria-label="Zoom Objekt"><svg><use href="#i-zobj"/></svg></button>
          <span class="sep"></span>
          <button class="tb" aria-label="Vergrößern"><svg><use href="#i-zin"/></svg></button>
          <button class="tb" aria-label="Verkleinern"><svg><use href="#i-zout"/></svg></button>
          <span class="sep"></span>
          <button class="tb" aria-label="Zoom Alles"><svg><use href="#i-zall"/></svg></button>
          <button class="tb" aria-label="Zoom Grenzen"><svg><use href="#i-zext"/></svg></button>
        </div>
      </div>

      <div class="bar-row">
        <div class="bar">
          <button class="tb" aria-label="Layereigenschaften"><svg><use href="#i-layers"/></svg></button>
          <span class="combo layer">
            <span class="layer-state">
              <svg><use href="#i-bulb"/></svg><svg><use href="#i-sun"/></svg><svg><use href="#i-vpfreeze"/></svg><svg><use href="#i-lock"/></svg><span class="swatch"></span>
            </span>
            <select aria-label="Layer"><option>RLX_L_TABLE</option></select>
          </span>
          <button class="tb" aria-label="Objektlayer aktuell"><svg><use href="#i-laycur"/></svg></button>
          <button class="tb" aria-label="Layer vorher"><svg><use href="#i-layprev"/></svg></button>
          <button class="tb" aria-label="Layerstatus"><svg><use href="#i-layers"/></svg></button>
        </div>
        <div class="bar props">
          <span class="combo color"><span class="layer-state"><span class="swatch"></span></span><select aria-label="Farbe"><option>VonLayer</option></select></span>
          <span class="combo ltype"><span class="stroke"></span><select aria-label="Linientyp"><option>VonLayer</option></select></span>
          <span class="combo lweight"><span class="stroke"></span><select aria-label="Linienstärke"><option>VonLayer</option></select></span>
          <span class="combo off"><select aria-label="Plotstil" disabled><option>VonFarbe</option></select></span>
        </div>
        <div class="bar">
          <button class="tb" aria-label="Linear"><svg><use href="#i-dlin"/></svg></button>
          <button class="tb" aria-label="Ausgerichtet"><svg><use href="#i-dali"/></svg></button>
          <button class="tb" aria-label="Bogenlänge"><svg><use href="#i-darc"/></svg></button>
          <button class="tb" aria-label="Koordinaten"><svg><use href="#i-dord"/></svg></button>
          <span class="sep"></span>
          <button class="tb" aria-label="Radius"><svg><use href="#i-drad"/></svg></button>
          <button class="tb" aria-label="Verkürzt"><svg><use href="#i-djog"/></svg></button>
          <button class="tb" aria-label="Durchmesser"><svg><use href="#i-ddia"/></svg></button>
          <button class="tb" aria-label="Winkel"><svg><use href="#i-dang"/></svg></button>
          <span class="sep"></span>
          <button class="tb" aria-label="Schnellbemaßung"><svg><use href="#i-dquick"/></svg></button>
          <button class="tb" aria-label="Basislinie"><svg><use href="#i-dbase"/></svg></button>
          <button class="tb" aria-label="Weiterführen"><svg><use href="#i-dcont"/></svg></button>
          <button class="tb" aria-label="Abstand"><svg><use href="#i-dspace"/></svg></button>
          <button class="tb" aria-label="Bruch"><svg><use href="#i-dbreak"/></svg></button>
          <span class="sep"></span>
          <button class="tb" aria-label="Toleranz"><svg><use href="#i-tol"/></svg></button>
          <button class="tb" aria-label="Zentrumsmarke"><svg><use href="#i-cmark"/></svg></button>
          <button class="tb" aria-label="Prüfung"><svg><use href="#i-dinsp"/></svg></button>
          <button class="tb" aria-label="Verkürzt linear"><svg><use href="#i-djogl"/></svg></button>
          <span class="sep"></span>
          <button class="tb" aria-label="Bemaßung bearbeiten"><svg><use href="#i-dedit"/></svg></button>
          <button class="tb" aria-label="Bemaßungstext bearbeiten"><svg><use href="#i-dtedit"/></svg></button>
          <button class="tb" aria-label="Aktualisieren"><svg><use href="#i-dupd"/></svg></button>
          <span class="sep"></span>
          <span class="combo indent"><select aria-label="Aktueller Bemaßungsstil"><option>ISO-25</option></select></span>
          <button class="tb" aria-label="Bemaßungsstil"><svg><use href="#i-dstyle"/></svg></button>
        </div>
      </div>

      <div class="bar-row relux">
        <div class="bar">
          <button class="tb" aria-label="Raum"><svg><use href="#i-r1"/></svg></button>
          <button class="tb" aria-label="Leuchte"><svg><use href="#i-r2"/></svg></button>
          <button class="tb" aria-label="Leuchtenreihe"><svg><use href="#i-r3"/></svg></button>
          <button class="tb" aria-label="Leuchtenkreis"><svg><use href="#i-r4"/></svg></button>
          <button class="tb" aria-label="Beschriftung"><svg><use href="#i-r5"/></svg></button>
          <button class="tb" aria-label="Isolux"><svg><use href="#i-r6"/></svg></button>
          <button class="tb" aria-label="Berechnen"><svg><use href="#i-r7"/></svg></button>
          <button class="tb" aria-label="Export"><svg><use href="#i-r8"/></svg></button>
          <span class="sep"></span>
          <button class="tb" aria-label="Ebene 1"><svg><use href="#i-r9"/></svg></button>
          <button class="tb" aria-label="Ebene 2"><svg><use href="#i-r10"/></svg></button>
          <button class="tb" aria-label="Ebene 3"><svg><use href="#i-r11"/></svg></button>
          <button class="tb" aria-label="Ebene 4"><svg><use href="#i-r12"/></svg></button>
          <span class="sep"></span>
          <button class="tb" aria-label="Werkzeuge"><svg><use href="#i-r13"/></svg></button>
          <button class="tb" aria-label="Info"><svg><use href="#i-r14"/></svg></button>
        </div>
        <div class="bar">
          <button class="tb" aria-label="Raum zeichnen"><svg><use href="#i-r15"/></svg></button>
          <button class="tb" aria-label="Raum füllen"><svg><use href="#i-r16"/></svg></button>
          <button class="tb" aria-label="Raum ändern"><svg><use href="#i-r17"/></svg></button>
          <span class="sep"></span>
          <button class="tb" aria-label="Messfläche"><svg><use href="#i-r18"/></svg></button>
          <button class="tb" aria-label="Messfläche ändern"><svg><use href="#i-r19"/></svg></button>
        </div>
      </div>
    </div>

    <div class="work">
      <div class="side-bar draw">
        <button class="tb" aria-label="Linie"><svg><use href="#i-line"/></svg></button>
        <button class="tb" aria-label="Konstruktionslinie"><svg><use href="#i-xline"/></svg></button>
        <button class="tb" aria-label="Polylinie"><svg><use href="#i-pline"/></svg></button>
        <button class="tb" aria-label="Polygon"><svg><use href="#i-poly"/></svg></button>
        <button class="tb" aria-label="Rechteck"><svg><use href="#i-rect"/></svg></button>
        <button class="tb" aria-label="Bogen"><svg><use href="#i-arc"/></svg></button>
        <button class="tb" aria-label="Kreis"><svg><use href="#i-circ"/></svg></button>
        <button class="tb" aria-label="Revisionswolke"><svg><use href="#i-cloud"/></svg></button>
        <button class="tb" aria-label="Spline"><svg><use href="#i-spline"/></svg></button>
        <button class="tb" aria-label="Ellipse"><svg><use href="#i-ell"/></svg></button>
        <button class="tb" aria-label="Ellipsenbogen"><svg><use href="#i-ellarc"/></svg></button>
        <button class="tb" aria-label="Block einfügen"><svg><use href="#i-ins"/></svg></button>
        <button class="tb" aria-label="Block erstellen"><svg><use href="#i-mkblk"/></svg></button>
        <button class="tb" aria-label="Punkt"><svg><use href="#i-point"/></svg></button>
        <button class="tb" aria-label="Schraffur"><svg><use href="#i-hatch"/></svg></button>
        <button class="tb" aria-label="Abstufung"><svg><use href="#i-grad"/></svg></button>
        <button class="tb" aria-label="Region"><svg><use href="#i-region"/></svg></button>
        <button class="tb" aria-label="Tabelle"><svg><use href="#i-table"/></svg></button>
        <button class="tb" aria-label="Absatztext"><svg><use href="#i-mtext"/></svg></button>
        <button class="tb" aria-label="Ausgewählte hinzufügen"><svg><use href="#i-addsel"/></svg></button>
      </div>

      <div class="canvas">
        <svg class="plan" viewBox="18 158 1226 504" preserveAspectRatio="xMinYMin slice">
          <defs>
            <pattern id="brick" width="12" height="6" patternUnits="userSpaceOnUse">
              <path d="M0 1.500h5M7 1.500h4M2 3.500h6M9 3.500h3M0 5.500h3M5 5.500h5" stroke="#4c515c" stroke-width=".8"/>
            </pattern>
            <pattern id="diag" width="6" height="6" patternUnits="userSpaceOnUse">
              <path d="M-1 7L7-1M-1 1l2-2M5 7l2-2" stroke="#646972" stroke-width="1"/>
            </pattern>
            <!-- one axis of the building: column, windows, furniture, door -->
            <g id="bay">
              <path class="thin" d="M378.500 205v6M389.500 205v6M483.500 205v6M494.500 205v6M587.500 205v6M598.500 205v6M692.500 205v6M703.500 205v6"/>
              <path class="dots" d="M398 212l73 43q9-14 12-50M788 212l-73 42q-9-14-12-49"/>
              <path class="thin" d="M393.500 274.500h60v164h-60zM393.500 408.500h60M602.500 274.500h120v164h-120zM602.500 408.500h120M662.500 274v134"/>
              <path class="thin" d="M455.500 311.500h45v45h-45zM555.500 311.500h45v45h-45zM724.500 311.500h45v45h-45z"/>
              <path class="thin" d="M593.500 565v-29.500h314v29.500"/>
              <path fill="url(#brick)" d="M579 566h343v9H579z"/>
              <path class="wall" d="M503.500 575v-84.500a76 76 0 0 1 75.500 84.500M579 565.500h342.500M579 574.500h343"/>
            </g>
            <g id="column">
              <path fill="#2a2f39" d="M373 210h22v23h-22z"/>
              <path class="wall" fill="url(#diag)" d="M373.500 210.500h22v22h-22z"/>
            </g>
          </defs>

          <path class="faint" d="M315.500 158v504M1063.500 158v504M18 490.500h1226"/>
          <path class="outer" d="M18 183.500h1226"/>
          <path class="thin" d="M18 204.500h1226M18 210.500h1226M18 238.500h1226"/>
          <path class="soft" d="M18 234h1226"/>
          <path class="axis" d="M22 221.500h1222"/>

          <use href="#bay" x="-837"/>
          <use href="#bay" x="-419"/>
          <use href="#bay"/>
          <use href="#bay" x="418"/>
          <use href="#bay" x="837"/>

          <path class="cover" d="M380 233h9v332h-9zM798 233h9v332h-9zM1217 233h9v223h-9zM1217 523h9v42h-9z"/>
          <path fill="url(#brick)" d="M380 233h9v333h-9zM798 233h9v333h-9zM1217 233h9v223h-9zM1217 523h9v43h-9z"/>
          <path class="wall" d="M379.500 233v333M389 233v333M797.500 233v333M807 233v333"/>
          <path class="wall" d="M1217 566v-43M1226 566v-42.500h-76a67 67 0 0 1 67-67h9V233M1217 233v223"/>
          <use href="#column"/>
          <use href="#column" x="418"/>
          <use href="#column" x="837"/>

          <!-- calculation area with the luminaire line -->
          <path class="area" d="M18 275.500h323.500v253H18"/>
          <path fill="#f0f" stroke="#e8c8ee" d="M10 391.500h171v9H10zM183.500 391.500h178v9h-178z"/>
          <path stroke="#e8c8ee" d="M91.500 391v5M272.500 391v5"/>

          <g class="lux">
            <text x="34" y="297">219</text><text x="75" y="297">248</text><text x="116" y="297">267</text><text x="157" y="297">278</text><text x="198" y="297">278</text><text x="239" y="297">268</text><text x="280" y="297">251</text><text x="321" y="297">221</text>
            <text x="34" y="339">297</text><text x="75" y="339">355</text><text x="116" y="339">387</text><text x="157" y="339">397</text><text x="198" y="339">389</text><text x="239" y="339">396</text><text x="280" y="339">367</text><text x="321" y="339">318</text>
            <text x="34" y="381">367</text><text x="75" y="381">434</text><text x="116" y="381">483</text><text x="157" y="381">504</text><text x="198" y="381">509</text><text x="239" y="381">488</text><text x="280" y="381">460</text><text x="321" y="381">438</text>
            <text x="34" y="423">373</text><text x="75" y="423">438</text><text x="116" y="423">471</text><text x="157" y="423">488</text><text x="198" y="423">487</text><text x="239" y="423">477</text><text x="280" y="423">440</text><text x="321" y="423">401</text>
            <text x="34" y="466">276</text><text x="75" y="466">319</text><text x="116" y="466">345</text><text x="157" y="466">357</text><text x="198" y="466">369</text><text x="239" y="466">356</text><text x="280" y="466">327</text><text x="321" y="466">287</text>
            <text x="34" y="508">199</text><text x="75" y="508">218</text><text x="116" y="508">234</text><text x="157" y="508">242</text><text x="198" y="508">240</text><text x="239" y="508">237</text><text x="280" y="508">221</text><text x="321" y="508">198</text>
          </g>
          <g class="room-label">
            <text x="14" y="528">Office 1</text>
            <text x="14" y="534" font-weight="bold">Em = 345 lx</text>
          </g>

          <!-- cursor -->
          <path d="M485 418v29M485 453v30" stroke="#a0a3aa" stroke-width="2"/>
          <path d="M452 450.500h30M488 450.500h30M482.500 448.500h5v5h-5z" stroke="#e4e6ea" fill="none"/>

          <!-- UCS icon -->
          <path d="M31 616v30M34 649.500h31M28.500 646.500h6v6h-6z" stroke="#c4c7cd" fill="none"/>
          <g class="ucs"><text x="36" y="613">Y</text><text x="71" y="649">X</text></g>
        </svg>

        <div class="view-label"><button>[−]</button><button>[Oben]</button><button>[2D-Drahtkörper]</button></div>

        <div class="cube">
          <svg viewBox="0 0 92 96">
            <circle cx="48" cy="48" r="36" fill="none" stroke="#8a8d96" stroke-opacity=".38" stroke-width="8"/>
            <path d="M32 32h33v33H32z" fill="#bbbdc2" fill-opacity=".92" stroke="#8b8e96"/>
            <path d="M38 38h21v21H38z" fill="#adafb5"/>
            <g class="compass">
              <text x="48" y="16">N</text><text x="11" y="53">W</text><text x="86" y="53">O</text><text x="48" y="91">S</text>
            </g>
            <text class="face" x="48" y="52">OBEN</text>
          </svg>
          <button class="wks">WKS</button>
        </div>

        <div class="nav-bar">
          <button aria-label="Steuerungsrad"><svg viewBox="0 0 16 16"><circle cx="8" cy="8" r="5.500"/><circle cx="8" cy="8" r="2"/><path d="M2 2h12v9"/></svg></button>
          <button aria-label="Pan"><svg viewBox="0 0 16 16"><path d="M6 14L2 8l3 1-1-6 2 4 1-6 1 5 2-4v5l2-3-1 7-2 3z"/></svg></button>
          <button aria-label="Zoom"><svg viewBox="0 0 16 16"><path d="M1 1l5 5M6 1L1 6"/><circle cx="10" cy="8" r="4"/><path d="M7 11l-4 4"/></svg></button>
          <button aria-label="Orbit"><svg viewBox="0 0 16 16"><ellipse cx="8" cy="8" rx="6" ry="3"/><ellipse cx="8" cy="8" rx="3" ry="6"/></svg></button>
          <button aria-label="ShowMotion"><svg viewBox="0 0 16 16"><path d="M1 2h4v4H1zM6 2h4v4H6zM11 2h4v4h-4zM3 8h9v6H3zM6 9l4 2-4 2z"/></svg></button>
        </div>

        <div class="command">
          <ol class="history">
            <li>update tables...</li>
            <li>draw table... &nbsp;...done</li>
            <li class="last">&nbsp;...done</li>
          </ol>
          <div class="prompt">
            <div class="handle">
              <span class="grip"></span>
              <button aria-label="Schließen"><svg viewBox="0 0 12 12"><path d="M3 3l6 6M9 3L3 9" stroke="#ddd" stroke-width="1.500"/></svg></button>
              <button aria-label="Anpassen"><svg viewBox="0 0 12 12"><path d="M4 4l7 7" stroke="#ddd" stroke-width="2"/><path d="M1 3l2 1 1-1-1-2q4-1 4 2T3 7 1 3z" fill="#ddd"/></svg></button>
            </div>
            <label class="entry">
              <svg viewBox="0 0 16 12"><path d="M0 1h10v10H0z" fill="#9a9ca6"/><path d="M2 4l2 2-2 2M5 8.500h4" fill="none" stroke="#35375a"/><path d="M12 5h4l-2 2z" fill="#555"/></svg>
              <input type="text" aria-label="Befehl" placeholder="Befehl eingeben">
              <span class="up"></span>
            </label>
          </div>
        </div>
      </div>

      <div class="side-bar modify">
        <button class="tb" aria-label="Löschen"><svg><use href="#i-erase"/></svg></button>
        <button class="tb" aria-label="Kopieren"><svg><use href="#i-mcopy"/></svg></button>
        <button class="tb" aria-label="Spiegeln"><svg><use href="#i-mirror"/></svg></button>
        <button class="tb" aria-label="Versetzen"><svg><use href="#i-offset"/></svg></button>
        <button class="tb" aria-label="Reihe"><svg><use href="#i-array"/></svg></button>
        <button class="tb" aria-label="Schieben"><svg><use href="#i-move"/></svg></button>
        <button class="tb" aria-label="Drehen"><svg><use href="#i-rotate"/></svg></button>
        <button class="tb" aria-label="Varia"><svg><use href="#i-scale"/></svg></button>
        <button class="tb" aria-label="Strecken"><svg><use href="#i-stretch"/></svg></button>
        <button class="tb" aria-label="Stutzen"><svg><use href="#i-trim"/></svg></button>
        <button class="tb" aria-label="Dehnen"><svg><use href="#i-extend"/></svg></button>
        <button class="tb" aria-label="An Punkt brechen"><svg><use href="#i-brkpt"/></svg></button>
        <button class="tb" aria-label="Bruch"><svg><use href="#i-brk"/></svg></button>
        <button class="tb" aria-label="Verbinden"><svg><use href="#i-join"/></svg></button>
        <button class="tb" aria-label="Fase"><svg><use href="#i-cham"/></svg></button>
        <button class="tb" aria-label="Abrunden"><svg><use href="#i-fillet"/></svg></button>
        <button class="tb" aria-label="Mischkurven"><svg><use href="#i-blend"/></svg></button>
        <button class="tb" aria-label="Ursprung"><svg><use href="#i-explode"/></svg></button>
      </div>
    </div>

    <footer class="foot">
      <div class="layouts">
        <button class="layout active">Modell</button>
        <button class="layout">Layout1</button>
        <button class="layout">Layout2</button>
        <button class="layout plus" aria-label="Neues Layout">+</button>
      </div>
      <div class="status">
        <div class="cell"><button class="model">MODELL</button></div>
        <div class="cell">
          <button class="tb" aria-label="Raster"><svg><use href="#s-grid"/></svg></button>
          <button class="tb" aria-label="Fang"><svg><use href="#s-snap"/></svg></button>
          <button class="tb arrow" aria-label="Fangoptionen"><svg><use href="#i-down"/></svg></button>
        </div>
        <div class="cell">
          <button class="tb" aria-label="Ortho"><svg><use href="#s-ortho"/></svg></button>
          <button class="tb" aria-label="Polar"><svg><use href="#s-polar"/></svg></button>
          <button class="tb arrow" aria-label="Polaroptionen"><svg><use href="#i-down"/></svg></button>
          <button class="tb" aria-label="Isometrie"><svg><use href="#s-iso"/></svg></button>
          <button class="tb arrow" aria-label="Isometrieoptionen"><svg><use href="#i-down"/></svg></button>
        </div>
        <div class="cell">
          <button class="tb" aria-label="Objektfangspur"><svg><use href="#s-track"/></svg></button>
          <button class="tb" aria-label="Objektfang"><svg><use href="#s-osnap"/></svg></button>
          <button class="tb arrow" aria-label="Objektfangoptionen"><svg><use href="#i-down"/></svg></button>
        </div>
        <div class="cell">
          <button class="tb on" aria-label="Beschriftungssichtbarkeit"><svg><use href="#s-anno"/></svg></button>
          <button class="tb" aria-label="Auto-Maßstab"><svg><use href="#s-anno"/></svg></button>
          <button class="tb" aria-label="Maßstab"><svg><use href="#s-scale"/></svg></button>
          <button class="ratio">1:1</button>
          <button class="tb arrow" aria-label="Maßstabsliste"><svg><use href="#i-down"/></svg></button>
        </div>
        <div class="cell">
          <button class="tb" aria-label="Arbeitsbereich"><svg><use href="#s-gear"/></svg></button>
          <button class="tb arrow" aria-label="Arbeitsbereiche"><svg><use href="#i-down"/></svg></button>
        </div>
        <div class="cell"><button class="tb" aria-label="Beschriftungsüberwachung"><svg><use href="#s-plus"/></svg></button></div>
        <div class="cell"><button class="tb" aria-label="Objekte isolieren"><svg><use href="#s-iso2"/></svg></button></div>
        <div class="cell"><button class="tb" aria-label="Hardwarebeschleunigung"><svg><use href="#s-hw"/></svg></button></div>
        <div class="cell">
          <button class="tb" aria-label="Systemvariablen"><svg><use href="#s-mon"/></svg></button>
          <button class="tb" aria-label="Plotstatus"><svg><use href="#s-plot"/></svg></button>
        </div>
        <div class="cell">
          <button class="tb" aria-label="Vollbild"><svg><use href="#s-clean"/></svg></button>
          <button class="tb" aria-label="Anpassen"><svg><use href="#s-menu"/></svg></button>
        </div>
      </div>
    </footer>
  </div>

</body>

</html>
```

FILE: styles.css
```css
* {
  box-sizing: border-box;
}

body {
  margin: 0;
  height: 100vh;
  overflow: hidden;
  background: #000;
  font-family: Roboto, "Noto Sans", sans-serif;
  font-size: 8px;
  line-height: 12px;
  position: relative;
}

button,
input,
select {
  font: inherit;
  color: inherit;
  margin: 0;
  padding: 0;
  border: none;
  background: none;
}

button {
  cursor: pointer;
}

.sprite {
  position: absolute;
  width: 0;
  height: 0;
}

/* host application */

.host {
  height: 100%;
  display: flex;
  flex-direction: column;
}

.host-bar {
  height: 32px;
  flex: none;
  display: flex;
  justify-content: space-between;
  padding: 0 8px 0 13px;
}

.back-btn {
  width: 25px;
  height: 25px;
  margin-top: 7px;
}

.back-btn svg {
  display: block;
  width: 25px;
  height: 25px;
}

.notch {
  width: 28px;
  height: 2px;
  background: #2a2a2a;
  border-radius: 0 0 4px 4px;
  margin-left: 24px;
}

.host-controls {
  display: flex;
  gap: 16px;
  padding-top: 4px;
  height: 12px;
}

.host-controls svg {
  display: block;
  width: 8px;
  height: 8px;
}

.host-main {
  flex: 1;
  display: flex;
}

.host-side {
  width: 80px;
  display: flex;
  align-items: flex-start;
  gap: 5px;
  padding: 12px 0 0 15px;
  color: #999;
}

.side-icon {
  width: 8px;
  height: 8px;
  margin-top: 1px;
  background: #444;
}

.host-page {
  flex: 1;
  background: #fff;
  padding: 6px 0 9px 204px;
  margin-bottom: 1px;
}

.page-rule {
  height: 100%;
  border-left: 1px solid #b5b5b5;
  padding-left: 9px;
}

.logo {
  height: 11px;
  overflow: hidden;
  font-family: "Liberation Sans", sans-serif;
  font-size: 40px;
  line-height: 36px;
  display: flex;
  color: #000;
}

.logo i {
  font-style: normal;
  font-weight: bold;
  color: #fff;
  -webkit-text-stroke: 1px #222;
}

.logo sup {
  font-size: 9px;
  line-height: 14px;
}

/* CAD window */

.cad {
  position: absolute;
  inset: 49px 14px 37px 0;
  display: flex;
  flex-direction: column;
  background: #5b5b5b;
  border: 1px solid #6f9fc8;
  border-left: none;
  box-shadow: 0 2px 12px rgba(0, 0, 0, 0.35);
  color: #e6e6e6;
}

.cad-head {
  display: grid;
  grid-template-columns: 26px 1fr;
  grid-template-rows: 20px 14px;
  background: #fff;
}

.app-btn {
  grid-row: 1 / 3;
  margin-top: 4px;
  background: linear-gradient(#9a9a9a, #5f5f5f);
  border-right: 1px solid #444;
}

.app-btn svg {
  display: block;
  width: 25px;
  height: 27px;
}

.title-row {
  display: flex;
  align-items: flex-end;
}

.quick,
.info {
  display: flex;
  align-items: center;
  height: 16px;
  background: linear-gradient(#8b8b8b, #6b6b6b);
}

.quick {
  padding: 0 0 0 4px;
}

.quick .arrow {
  width: 11px;
}

.title {
  flex: 1;
  display: flex;
  justify-content: center;
  gap: 10px;
  height: 18px;
  line-height: 16px;
  color: #333;
}

.tb {
  width: 15px;
  height: 15px;
  flex: none;
  display: flex;
  align-items: center;
  justify-content: center;
}

.tb svg {
  width: 12px;
  height: 12px;
  flex: none;
}

.tb.arrow {
  width: 9px;
}

.quick .tb.arrow {
  width: 11px;
}

.dim {
  opacity: 0.5;
}

.sep {
  width: 1px;
  height: 13px;
  margin: 0 2px;
  flex: none;
  background: #7c7c7c;
}

.search {
  width: 120px;
  height: 15px;
  padding: 0 2px;
  background: #666968;
  border: 1px solid #4b4b4b;
  font-style: italic;
}

.search::placeholder {
  color: #c4c4c4;
}

.login {
  display: flex;
  align-items: center;
  gap: 3px;
  width: 70px;
  margin-left: 2px;
}

.login svg {
  width: 12px;
  height: 12px;
}

.info .sep {
  margin: 0 3px;
}

.win-controls {
  display: flex;
  align-self: center;
  align-items: center;
  gap: 22px;
  padding: 0 12px 0 16px;
  color: #222;
}

.win-controls svg {
  display: block;
  width: 8px;
  height: 8px;
}

.win-controls .resize-mark {
  margin-right: -17px;
}

.menu-row {
  display: flex;
  align-items: center;
  gap: 15px;
  padding-left: 10px;
  background: linear-gradient(#858585, #5c5c5c);
  border-top: 1px solid #666;
}

.menu-row a {
  color: #f0f0f0;
  text-decoration: none;
}

.doc-controls {
  display: flex;
  gap: 3px;
  margin-left: auto;
  padding-right: 2px;
}

.doc-controls svg {
  display: block;
  width: 8px;
  height: 8px;
}

.file-tabs {
  display: flex;
  align-items: flex-end;
  height: 17px;
  flex: none;
  padding-left: 11px;
  background: #383838;
}

.file-tab {
  width: 86px;
  height: 15px;
  padding-left: 9px;
  text-align: left;
  color: #b8b8b8;
  background: #4e4e4e;
  border-radius: 6px 6px 0 0;
  clip-path: polygon(5% 0, 94% 0, 100% 100%, 0 100%);
}

.file-tab.active {
  color: #fff;
  width: 84px;
  padding-left: 5px;
  background: linear-gradient(#7a7a7a, #5b5b5b);
}

.close {
  padding-left: 13px;
  color: #444;
}

.file-tab.plus {
  width: 16px;
  height: 11px;
  margin-bottom: 2px;
  padding: 0;
  font-size: 10px;
  line-height: 10px;
  text-align: center;
}

/* toolbars */

.bars {
  display: flex;
  flex-direction: column;
  gap: 1px;
  padding: 1px 0 3px;
}

.bar-row {
  display: flex;
  gap: 1px;
}

.bar {
  display: flex;
  align-items: center;
  height: 17px;
  padding: 0 2px 0 4px;
  background: #525252;
  border: 1px solid #484848;
  border-left: 2px dotted #444;
}

.bar-row .bar:first-child {
  padding: 0 1px 0 2px;
}

.gap {
  width: 3px;
}

.combo {
  position: relative;
  display: flex;
  align-items: center;
  width: 80px;
  height: 14px;
  background: #e2e2e2;
  color: #333;
}

.combo select {
  appearance: none;
  flex: 1;
  min-width: 0;
  height: 14px;
  padding-left: 3px;
  opacity: 1;
}

.combo.indent select {
  padding-left: 12px;
}

.combo::after {
  content: "";
  position: absolute;
  right: 4px;
  top: 4px;
  width: 4px;
  height: 4px;
  box-sizing: border-box;
  border: solid #777;
  border-width: 0 1px 1px 0;
  transform: rotate(45deg);
}

.combo.layer {
  width: 200px;
  margin-right: 1px;
}

.layer-state {
  display: flex;
  align-items: center;
  flex: none;
  padding-left: 2px;
}

.layer-state svg {
  width: 11px;
  height: 11px;
}

.swatch {
  width: 7px;
  height: 7px;
  margin: 0 2px 0 1px;
  background: #fff;
  border: 1px solid #333;
}

.combo.layer .swatch {
  margin-right: 0;
}

.props {
  gap: 4px;
  padding: 0 1px 0 3px;
}

.combo.color {
  width: 100px;
}

.combo.color select {
  padding-left: 0;
}

.combo.ltype {
  width: 106px;
}

.combo.lweight {
  width: 83px;
}

.stroke {
  width: 40px;
  height: 1px;
  margin-left: 3px;
  background: #555;
}

.lweight .stroke {
  width: 24px;
}

.combo.off {
  background: #b4b4b4;
  color: #777;
}

.combo.off select {
  padding-left: 6px;
}

.relux .tb svg {
  width: 11px;
  height: 11px;
  background: #f4f4f4;
}

/* work area */

.work {
  flex: 1;
  display: flex;
  min-height: 0;
}

.side-bar {
  display: grid;
  grid-auto-rows: 1fr;
  justify-items: center;
  align-items: center;
  align-self: flex-start;
  padding-top: 3px;
  background: #525252;
  border: 1px solid #484848;
  border-top: 2px dotted #888;
}

.side-bar .tb {
  width: 12px;
  height: 14px;
}

.draw {
  width: 16px;
  height: 300px;
  margin-right: 2px;
  padding-right: 2px;
  border-left: none;
}

.modify {
  width: 18px;
  height: 271px;
  margin: 0 2px 0 1px;
}

.canvas {
  flex: 1;
  position: relative;
  overflow: hidden;
  background: #212530;
}

.plan {
  display: block;
  width: 100%;
  height: 100%;
  fill: none;
}

.thin {
  stroke: #4b4f57;
}

.soft {
  stroke: #3a3e48;
  stroke-width: 2;
}

.faint {
  stroke: #272b35;
}

.outer {
  stroke: #a3a8b1;
}

.wall {
  stroke: #969ba5;
}

.cover {
  fill: #212530;
}

.dots {
  stroke: #b5b8be;
  stroke-dasharray: 1 3;
}

.axis {
  stroke: #b0222a;
  stroke-dasharray: 6 3;
}

.area {
  stroke: #b81a22;
}

.lux {
  font-family: "Liberation Sans", sans-serif;
  font-size: 5px;
  font-weight: bold;
  text-anchor: middle;
  fill: #fff;
  stroke: #fff;
  stroke-width: 0.5;
}

.room-label {
  font-family: "Liberation Sans", sans-serif;
  font-size: 5px;
  fill: #fff;
}

.ucs {
  font-size: 13px;
  text-anchor: middle;
  fill: #c4c7cd;
}

.view-label {
  position: absolute;
  left: 2px;
  top: 3px;
  display: flex;
  font-family: "Open Sans", sans-serif;
  color: #e8e8e8;
}

.cube {
  position: absolute;
  top: 6px;
  right: 12px;
  width: 92px;
}

.cube svg {
  display: block;
  width: 92px;
  height: 96px;
}

.compass {
  font-family: "Open Sans", sans-serif;
  font-size: 13px;
  font-weight: bold;
  text-anchor: middle;
  fill: #b2b4ba;
}

.face {
  font-family: Roboto, sans-serif;
  font-size: 9px;
  font-weight: bold;
  text-anchor: middle;
  fill: #474b58;
}

.wks {
  display: flex;
  width: 32px;
  height: 12px;
  margin: 11px 0 0 32px;
  padding-left: 3px;
  background: #8f919d;
  border: 1px solid #a3a5b0;
  border-radius: 3px;
  color: #d5d7dd;
  line-height: 10px;
}

.nav-bar {
  position: absolute;
  top: 141px;
  right: 2px;
  width: 22px;
  height: 142px;
  display: flex;
  flex-direction: column;
  align-items: center;
  justify-content: space-around;
  padding: 6px 0;
  background: rgba(140, 144, 152, 0.5);
  border-radius: 3px;
}

.nav-bar svg {
  display: block;
  width: 16px;
  height: 16px;
  fill: none;
  stroke: #4a4f59;
}

.command {
  position: absolute;
  left: 281px;
  right: 282px;
  bottom: 1px;
  font-family: "DejaVu Sans Mono", monospace;
}

.history {
  list-style: none;
  margin: 0;
  padding: 0 0 2px 40px;
  display: flex;
  flex-direction: column;
  align-items: flex-start;
  gap: 3px;
}

.history li {
  height: 10px;
  padding: 0 1px 0 6px;
  line-height: 10px;
  background: #55575c;
  border-radius: 1px;
  color: #d0d0d0;
}

.history .last {
  color: #fff;
}

.prompt {
  display: flex;
  height: 16px;
}

.handle {
  width: 36px;
  display: flex;
  align-items: center;
  gap: 2px;
  padding-left: 3px;
  background: linear-gradient(#5a5a5a, #333);
}

.handle svg {
  display: block;
  width: 12px;
  height: 12px;
}

.grip {
  width: 3px;
  height: 12px;
  border: solid #888;
  border-width: 0 1px;
}

.entry {
  flex: 1;
  display: flex;
  align-items: center;
  gap: 4px;
  padding: 0 3px 0 4px;
  background: #bcbdc1;
}

.entry svg {
  width: 16px;
  height: 12px;
}

.entry input {
  flex: 1;
  min-width: 0;
  height: 14px;
  font-style: italic;
}

.entry input::placeholder {
  color: #6e6f74;
}

.up {
  border: 2px solid transparent;
  border-top: none;
  border-bottom: 3px solid #333;
}

/* layout tabs and status bar */

.foot {
  display: flex;
  justify-content: space-between;
  height: 20px;
  flex: none;
  background: #383838;
}

.layouts {
  display: flex;
  padding: 1px 0 0 5px;
}

.layout {
  width: 42px;
  height: 12px;
  margin-right: 1px;
  color: #b4b4b4;
  background: #545454;
  border-radius: 0 0 4px 4px;
  clip-path: polygon(0 0, 100% 0, 91% 100%, 9% 100%);
}

.layout.active {
  color: #fff;
  font-weight: bold;
  background: #747474;
}

.layout.plus {
  width: 18px;
  font-size: 11px;
}

.status {
  display: flex;
  padding: 1px 0;
}

.cell {
  display: flex;
  align-items: center;
  padding: 0 1px;
  background: #505050;
  border: 1px solid #686868;
}

.model {
  width: 33px;
  color: #fff;
}

.ratio {
  width: 14px;
}

.on {
  color: #2e86ee;
}
```
